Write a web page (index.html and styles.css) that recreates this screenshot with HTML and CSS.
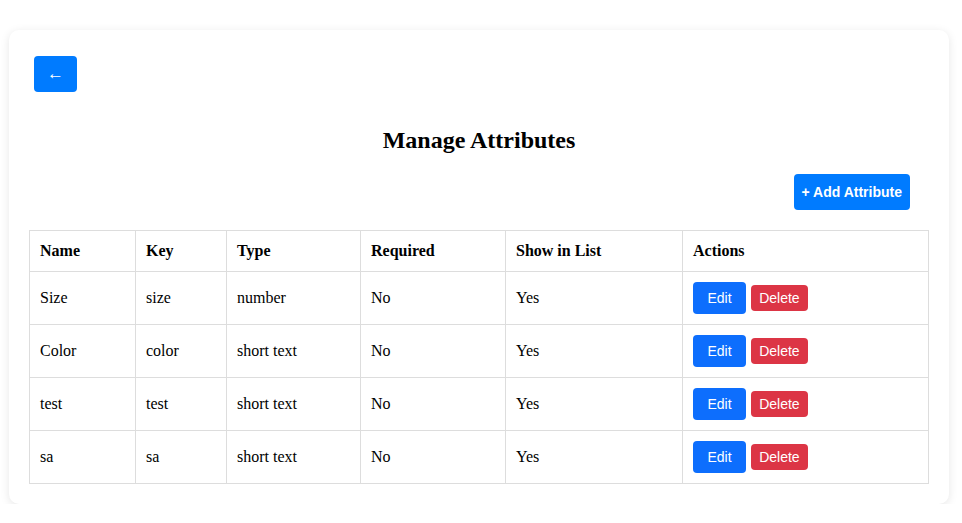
FILE: index.html
```html
<!DOCTYPE html>
<html>
<head>
<meta charset="utf-8">
<link rel="stylesheet" href="styles.css">
</head>
<body>
<div class="card">
  <div class="top">
    <button class="back">←</button>
  </div>
  <h2 class="title">Manage Attributes</h2>
  <div class="actions-bar">
    <button class="add">+ Add Attribute</button>
  </div>
  <table class="grid">
    <colgroup>
      <col class="c1"><col class="c2"><col class="c3"><col class="c4"><col class="c5"><col class="c6">
    </colgroup>
    <thead>
      <tr><th>Name</th><th>Key</th><th>Type</th><th>Required</th><th>Show in List</th><th>Actions</th></tr>
    </thead>
    <tbody>
      <tr><td>Size</td><td>size</td><td>number</td><td>No</td><td>Yes</td><td><button class="edit">Edit</button><button class="del">Delete</button></td></tr>
      <tr><td>Color</td><td>color</td><td>short text</td><td>No</td><td>Yes</td><td><button class="edit">Edit</button><button class="del">Delete</button></td></tr>
      <tr><td>test</td><td>test</td><td>short text</td><td>No</td><td>Yes</td><td><button class="edit">Edit</button><button class="del">Delete</button></td></tr>
      <tr><td>sa</td><td>sa</td><td>short text</td><td>No</td><td>Yes</td><td><button class="edit">Edit</button><button class="del">Delete</button></td></tr>
    </tbody>
  </table>
</div>
</body>
</html>
```
FILE: styles.css
```css
html, body {
  margin: 0;
  padding: 0;
  background: #fff;
  font-family: "Liberation Serif", "Times New Roman", serif;
  font-size: 16px;
  color: #000;
}
.card {
  margin: 30px 13px 0 9px;
  padding: 20px 20px 20px 20px;
  background: #fff;
  border-radius: 10px;
  box-shadow: 0 2px 10px rgba(0, 0, 0, 0.1);
}
.top {
  display: flex;
  padding: 6px 0 0 5px;
}
button {
  border: none;
  cursor: pointer;
  color: #fff;
  font-family: "Liberation Sans", Arial, sans-serif;
  font-size: 14px;
  line-height: 16px;
}
.back {
  background: #007bff;
  border-radius: 4px;
  width: 43px;
  height: 36px;
  padding: 0;
  font-size: 17px;
}
.title {
  margin: 34px 0 20px;
  text-align: center;
  font-size: 24px;
  line-height: 28px;
  font-weight: bold;
}
.actions-bar {
  display: flex;
  justify-content: flex-end;
  padding-right: 19px;
  margin-bottom: 20px;
}
.add {
  background: #007bff;
  border-radius: 4px;
  padding: 10px 8px;
  font-weight: bold;
}
.grid {
  width: 100%;
  border-collapse: collapse;
  border: 1px solid #ddd;
}
.c1 { width: 106px; }
.c2 { width: 91px; }
.c3 { width: 134px; }
.c4 { width: 145px; }
.c5 { width: 177px; }
.grid th, .grid td {
  border: 1px solid #ddd;
  padding: 10px;
  text-align: left;
  line-height: 20px;
  vertical-align: middle;
}
.grid th {
  font-weight: bold;
}
.grid td {
  padding: 10px 10px;
  height: 32px;
}
.edit {
  background: #0d6efd;
  border-radius: 4px;
  padding: 8px 14.5px;
  height: 32px;
  vertical-align: middle;
}
.del {
  background: #dc3545;
  border-radius: 4px;
  padding: 5px 8px;
  height: 26px;
  margin-left: 5px;
  vertical-align: middle;
}
```
